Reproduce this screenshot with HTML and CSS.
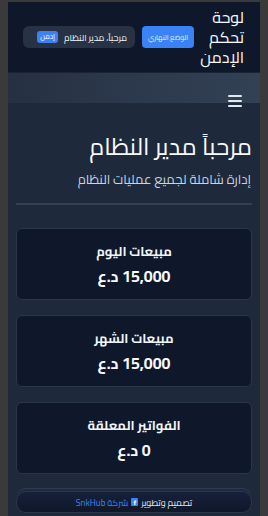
FILE: index.html
```html
<!DOCTYPE html>
<html lang="ar" dir="rtl">
<head>
<meta charset="utf-8">
<title>لوحة تحكم الإدمن</title>
<link rel="stylesheet" href="styles.css">
</head>
<body>
<div class="app">
  <header class="topbar">
    <h1 class="brand">لوحة تحكم الإدمن</h1>
    <div class="controls">
      <button class="mode-btn">الوضع النهاري</button>
      <div class="user-pill">
        <span class="user-name">مرحباً، مدير النظام</span>
        <span class="role-badge">إدمن</span>
      </div>
    </div>
  </header>
  <nav class="navstrip">
    <button class="burger" aria-label="menu"><span></span><span></span><span></span></button>
  </nav>
  <main class="content">
    <h2 class="page-title">مرحباً مدير النظام</h2>
    <p class="page-sub">إدارة شاملة لجميع عمليات النظام</p>
    <hr class="divider">
    <section class="stats">
      <div class="stat-card">
        <div class="stat-label">مبيعات اليوم</div>
        <div class="stat-value">15,000 د.ع</div>
      </div>
      <div class="stat-card">
        <div class="stat-label">مبيعات الشهر</div>
        <div class="stat-value">15,000 د.ع</div>
      </div>
      <div class="stat-card">
        <div class="stat-label">الفواتير المعلقة</div>
        <div class="stat-value">0 د.ع</div>
      </div>
    </section>
    <footer class="footer">
      <div class="footer-inner">
        <span class="credit">تصميم وتطوير</span>
        <span class="fb-icon">f</span>
        <span class="company">شركة SnkHub</span>
      </div>
    </footer>
  </main>
</div>
</body>
</html>
```
FILE: styles.css
```css
* { box-sizing: border-box; }
html, body { margin: 0; padding: 0; }
body {
  background: #3a3a3a;
  font-family: "Cairo", "Noto Sans Arabic", "DejaVu Sans", sans-serif;
  color: #f1f5f9;
  height: 516px;
  overflow: hidden;
}
.app {
  margin: 2px 8px 0;
  width: 252px;
}
.topbar {
  background: #0f172a;
  height: 70px;
  display: flex;
  align-items: center;
  padding: 0 16px 0 17px;
  gap: 12px;
}
.brand {
  margin: 0;
  font-size: 16px;
  font-weight: 400;
  line-height: 20px;
  width: 38px;
  color: #f8fafc;
}
.controls {
  display: flex;
  align-items: center;
  gap: 7px;
}
.mode-btn {
  background: #3b82f6;
  color: #e8f0ff;
  border: none;
  border-radius: 4px;
  height: 22px;
  width: 52px;
  padding: 0;
  font-family: inherit;
  font-size: 7px;
}
.user-pill {
  display: flex;
  align-items: center;
  gap: 6px;
  background: #273244;
  border-radius: 6px;
  height: 22px;
  padding: 0 8px;
  width: 112px;
}
.user-name {
  font-size: 9px;
  color: #f1f5f9;
  white-space: nowrap;
}
.role-badge {
  background: #3b82f6;
  color: #fff;
  font-size: 7px;
  border-radius: 3px;
  padding: 0 3px;
  height: 12px;
  line-height: 12px;
}
.navstrip {
  height: 31px;
  background: linear-gradient(to left, #334155, #263043);
  border-top: 1px solid #1a2436;
  display: flex;
  padding: 22px 18px 0 0;
}
.burger {
  position: relative;
  z-index: 2;
  width: 14px;
  height: 12px;
  background: none;
  border: none;
  padding: 0;
  display: flex;
  flex-direction: column;
  justify-content: space-between;
}
.burger span {
  display: block;
  height: 2px;
  width: 14px;
  background: #e2e8f0;
  border-radius: 1px;
}
.content {
  background: #1e293b;
  padding: 29px 8px 0;
  min-height: 420px;
}
.page-title {
  margin: 0;
  font-size: 24px;
  font-weight: 400;
  line-height: 30px;
  color: #f8fafc;
}
.page-sub {
  margin: 7px 1px 0 0;
  font-size: 13px;
  line-height: 20px;
  color: #cbd5e1;
}
.divider {
  border: none;
  height: 2px;
  background: #334155;
  margin: 14px 0 23px;
}
.stats {
  display: flex;
  flex-direction: column;
  gap: 15px;
}
.stat-card {
  background: #0f172a;
  border: 1px solid #2a3649;
  border-radius: 6px;
  height: 72px;
  display: flex;
  flex-direction: column;
  align-items: center;
  justify-content: center;
  gap: 6px;
}
.stat-label {
  font-size: 13px;
  font-weight: 700;
  line-height: 18px;
  color: #f1f5f9;
}
.stat-value {
  font-size: 16px;
  font-weight: 700;
  line-height: 20px;
  color: #f8fafc;
  direction: rtl;
}
.footer {
  margin-top: 14px;
  border-top: 1px solid #2f3b50;
  border-radius: 10px 10px 0 0;
  padding-top: 2px;
}
.footer-inner {
  border: 1px solid #2a3649;
  border-radius: 10px;
  background: linear-gradient(to bottom, #16203a, #0f172a);
  height: 22px;
  display: flex;
  align-items: center;
  justify-content: center;
  gap: 3px;
  font-size: 9px;
}
.credit { color: #e2e8f0; }
.company { color: #3b82f6; }
.fb-icon {
  display: inline-flex;
  align-items: center;
  justify-content: center;
  width: 7px;
  height: 8px;
  background: #3b82f6;
  color: #fff;
  border-radius: 1px;
  font-size: 6px;
  font-family: "DejaVu Sans", sans-serif;
  font-weight: 700;
}
```
